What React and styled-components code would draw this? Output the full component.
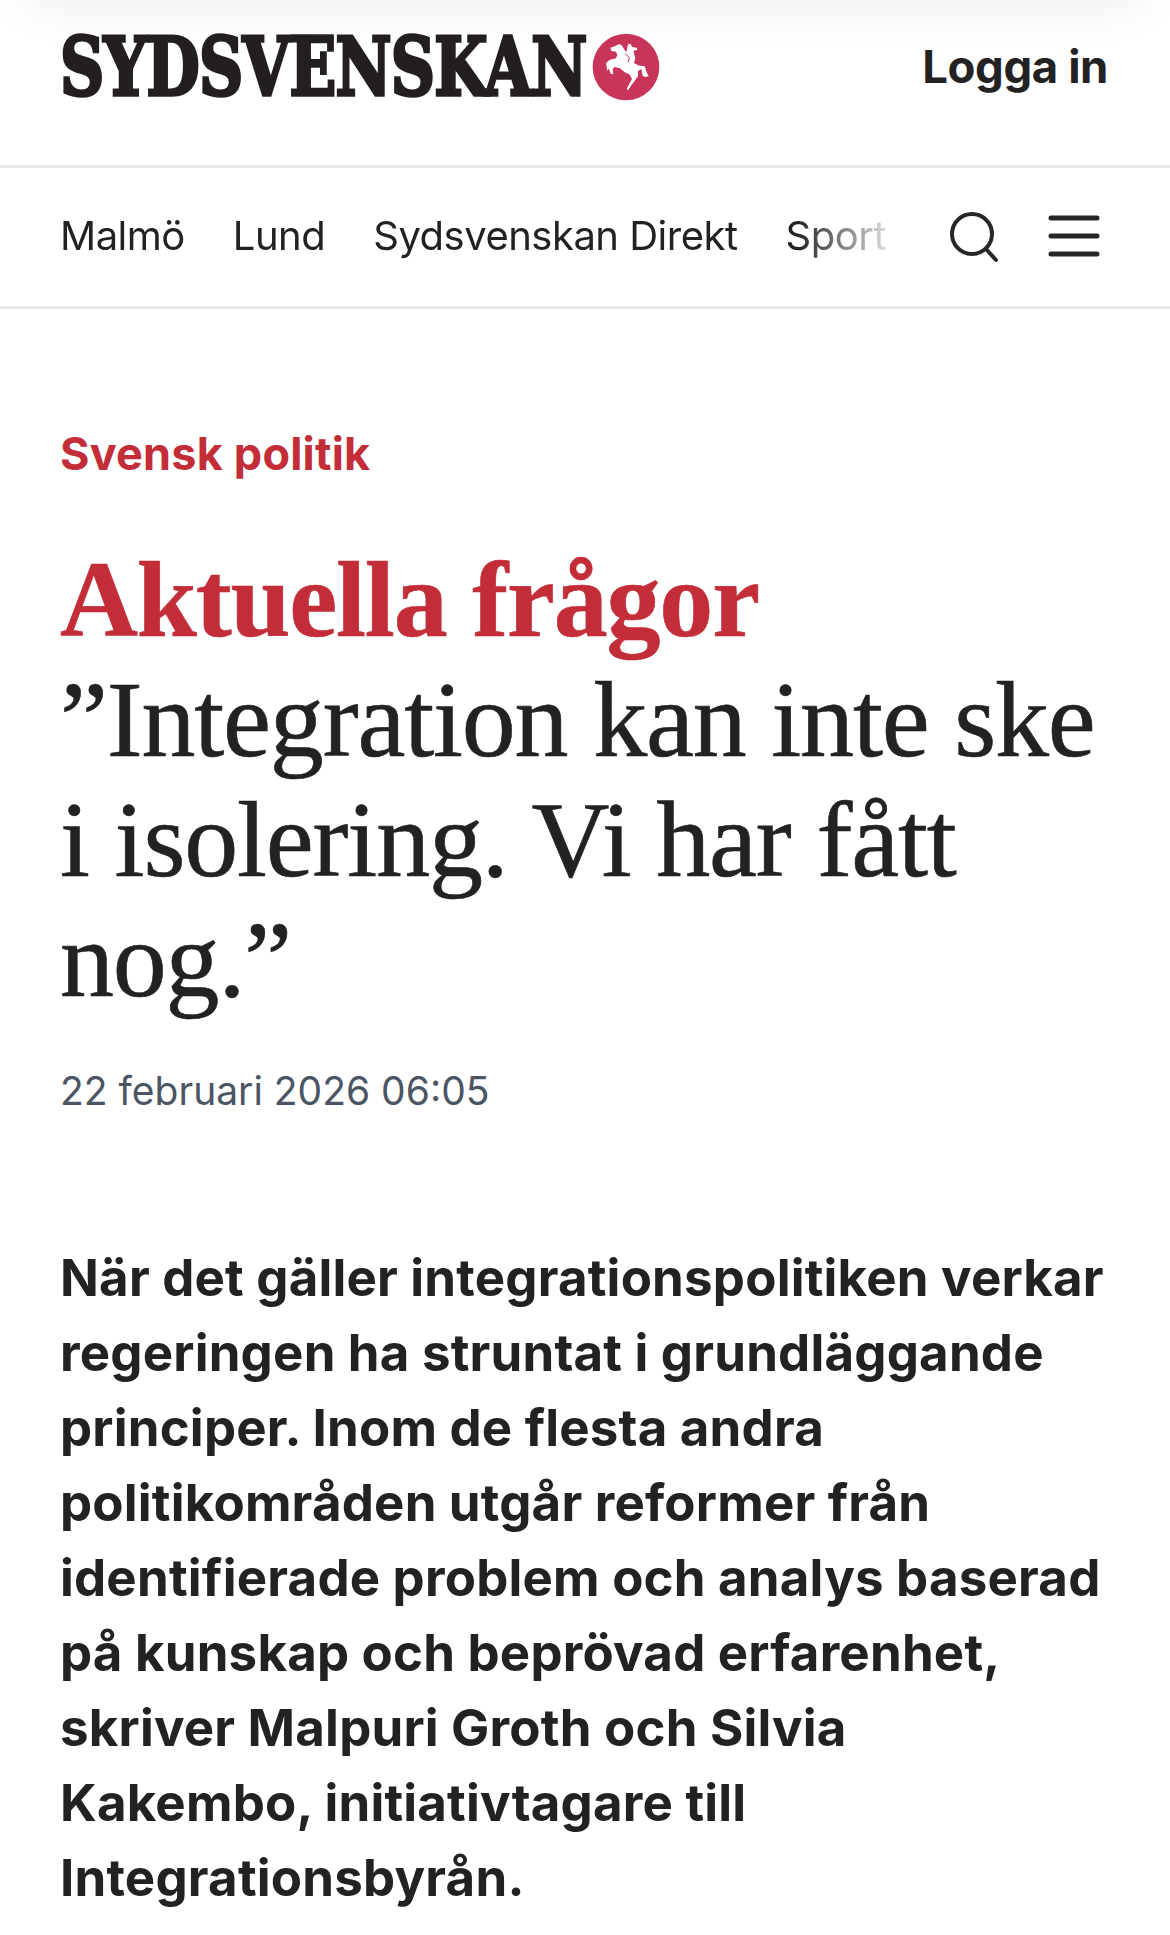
import styled, { createGlobalStyle } from "styled-components";

const GlobalStyle = createGlobalStyle`
  html, body {
    margin: 0;
    padding: 0;
    background: #ffffff;
  }
  body {
    overflow: hidden;
    font-family: "Inter", "Liberation Sans", sans-serif;
    color: #222222;
  }
`;

const navItems = ["Malmö", "Lund", "Sydsvenskan Direkt", "Sport"];

const Logo = () => (
  <LogoWrap>
    <LogoText>SYDSVENSKAN</LogoText>
    <svg width="68" height="68" viewBox="0 0 204 204" aria-hidden="true">
      <circle cx="102" cy="102" r="100" fill="#c9355a" />
      <path
        fill="#ffffff"
        d="M55 44 L68 40 L82 33 L90 38 L96 48 L103 58 L108 34 L116 32 L120 42 L134 44 L136 50 L124 54 L130 76 L126 90 L142 98 L158 100 L164 118 L170 130 L160 132 L152 128 L148 108 L138 114 L138 130 L126 146 L116 160 L108 172 L104 168 L112 152 L120 138 L112 124 L98 118 L84 106 L68 102 L62 108 L64 124 L56 122 L50 106 L46 114 L42 90 L54 80 L72 76 L76 66 L72 56 L58 54 Z"
      />
      <path fill="none" stroke="#c9355a" strokeWidth="3" d="M100 62 L112 74 L108 88" />
    </svg>
  </LogoWrap>
);

const SearchIcon = () => (
  <svg width="54" height="54" viewBox="0 0 54 54" fill="none" stroke="#262626" aria-hidden="true">
    <circle cx="25" cy="25" r="20" strokeWidth="4" />
    <path d="M39 40 L49 51" strokeWidth="4" strokeLinecap="round" />
  </svg>
);

const MenuIcon = () => (
  <svg width="54" height="54" viewBox="0 0 54 54" fill="none" stroke="#262626" aria-hidden="true">
    <path d="M4 9 H50 M4 27 H50 M4 45 H50" strokeWidth="5" strokeLinecap="round" />
  </svg>
);

export default function App() {
  return (
    <Page>
      <GlobalStyle />
      <TopBar>
        <Logo />
        <Login>Logga in</Login>
      </TopBar>
      <NavBar>
        <NavList>
          {navItems.map((item) => (
            <NavItem key={item}>{item}</NavItem>
          ))}
        </NavList>
        <NavIcons>
          <SearchIcon />
          <MenuIcon />
        </NavIcons>
      </NavBar>
      <Article>
        <Section>Svensk politik</Section>
        <Title>
          <Vignette>Aktuella frågor</Vignette>
          ”Integration kan inte ske i isolering. Vi har fått nog.”
        </Title>
        <Date>22 februari 2026 06:05</Date>
        <Lede>
          När det gäller integrationspolitiken verkar regeringen ha struntat i
          grundläggande principer. Inom de flesta andra politikområden utgår
          reformer från identifierade problem och analys baserad på kunskap och
          beprövad erfarenhet, skriver Malpuri Groth och Silvia Kakembo,
          initiativtagare till Integrationsbyrån.
        </Lede>
      </Article>
    </Page>
  );
}

const Page = styled.div`
  width: 1170px;
  height: 1935px;
  overflow: hidden;
  position: relative;
`;

const TopBar = styled.header`
  position: relative;
  height: 168px;
  box-sizing: border-box;
  padding: 33px 62px 0 60px;
  display: flex;
  justify-content: space-between;
  align-items: flex-start;
  border-bottom: 3px solid #e5e7eb;

  &::before {
    content: "";
    position: absolute;
    top: -40px;
    left: 30px;
    right: 30px;
    height: 40px;
    box-shadow: 0 0 50px rgba(0, 0, 0, 0.1);
  }
`;

const LogoWrap = styled.div`
  display: flex;
  align-items: center;
  gap: 7px;
`;

const LogoText = styled.span`
  display: inline-block;
  width: 525px;
  font-family: "DejaVu Serif", "Liberation Serif", serif;
  font-weight: 700;
  font-size: 80px;
  line-height: 68px;
  letter-spacing: -1px;
  color: #231f20;
  white-space: nowrap;
  transform-origin: left center;
  transform: scaleX(0.767);
  -webkit-text-stroke: 3.5px #231f20;
`;

const Login = styled.div`
  font-family: "Inter", "Liberation Sans", sans-serif;
  font-weight: 700;
  font-size: 45.5px;
  line-height: 68px;
  letter-spacing: -0.4px;
  color: #222222;
`;

const NavBar = styled.nav`
  height: 141px;
  box-sizing: border-box;
  padding: 0 22px 2px 60px;
  display: flex;
  align-items: center;
  gap: 59px;
  border-bottom: 3px solid #e5e7eb;
`;

const NavList = styled.div`
  width: 828px;
  flex: none;
  display: flex;
  gap: 48px;
  overflow: hidden;
  mask-image: linear-gradient(to right, #000 89%, rgba(0, 0, 0, 0.15) 100%);
`;

const NavItem = styled.span`
  flex: none;
  font-size: 40px;
  line-height: 56px;
  letter-spacing: -0.5px;
  color: #222222;
`;

const NavIcons = styled.div`
  display: flex;
  gap: 46px;
`;

const Article = styled.main`
  padding: 117px 60px 0 60px;
`;

const Section = styled.div`
  font-weight: 700;
  font-size: 45px;
  line-height: 56px;
  letter-spacing: 0.2px;
  color: #c32d38;
`;

const Title = styled.h1`
  margin: 58px 0 0;
  font-family: "Liberation Serif", serif;
  font-weight: 400;
  font-size: 108px;
  line-height: 120px;
  letter-spacing: -1.2px;
  color: #222222;
  -webkit-text-stroke: 0.6px #222222;
`;

const Vignette = styled.span`
  display: block;
  font-weight: 700;
  color: #c32d38;
  -webkit-text-stroke: 0.6px #c32d38;
`;

const Date = styled.div`
  margin-top: 43px;
  font-size: 39px;
  line-height: 56px;
  color: #4b5563;
`;

const Lede = styled.p`
  margin: 121px 0 0;
  font-weight: 700;
  font-size: 51px;
  line-height: 75px;
  letter-spacing: 0.2px;
  color: #222222;
`;
